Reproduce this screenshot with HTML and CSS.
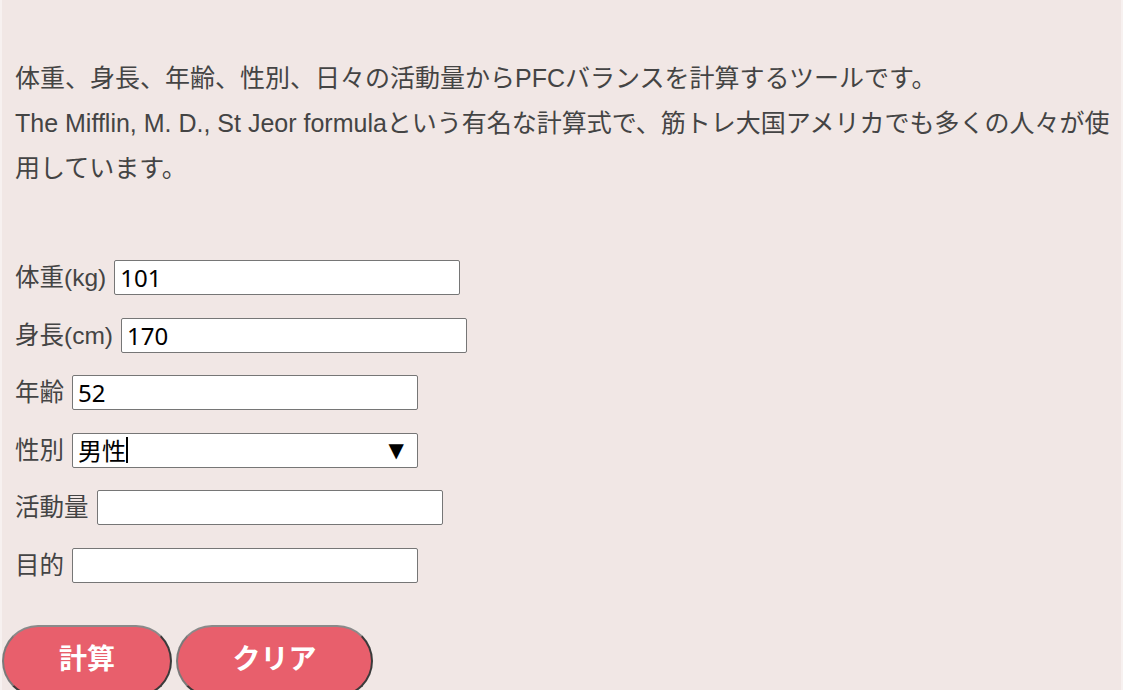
FILE: index.html
```html
<!DOCTYPE html>
<html lang="ja">
<head>
<meta charset="utf-8">
<title>PFCバランス計算</title>
<link rel="stylesheet" href="styles.css">
</head>
<body>
<div class="page">
  <div class="intro">
    <p>体重、身長、年齢、性別、日々の活動量からPFCバランスを計算するツールです。<br>The Mifflin, M. D., St Jeor formulaという有名な計算式で、筋トレ大国アメリカでも多くの人々が使用しています。</p>
  </div>
  <form class="form">
    <div class="row"><label>体重(kg)</label><input class="field" type="text" value="101"></div>
    <div class="row"><label>身長(cm)</label><input class="field" type="text" value="170"></div>
    <div class="row"><label>年齢</label><input class="field" type="text" value="52"></div>
    <div class="row"><label>性別</label><div class="field select"><span class="val">男性</span><span class="caret"></span><span class="arrow">▼</span></div></div>
    <div class="row"><label>活動量</label><input class="field" type="text" value=""></div>
    <div class="row"><label>目的</label><input class="field" type="text" value=""></div>
  </form>
  <div class="buttons">
    <button class="btn btn-calc" type="button">計算</button>
    <button class="btn btn-clear" type="button">クリア</button>
  </div>
</div>
</body>
</html>
```
FILE: styles.css
```css
html, body {
  margin: 0;
  padding: 0;
  background: #f7f1f0;
  height: 100%;
  overflow: hidden;
}
.page {
  margin-left: 2px;
  margin-right: 2px;
  background: #f1e7e5;
  min-height: 100%;
  font-family: "Liberation Sans", "Noto Sans CJK JP", sans-serif;
  color: #444;
  font-size: 24.5px;
}
.intro {
  padding: 56px 4px 0 13px;
  font-size: 25px;
}
.intro p {
  margin: 0;
  line-height: 45px;
}
.form {
  padding: 69px 0 0 13px;
  display: flex;
  flex-direction: column;
  gap: 22.5px;
}
.row {
  display: flex;
  align-items: center;
  gap: 8px;
  height: 35px;
}
.row label {
  line-height: 35px;
}
.field {
  box-sizing: border-box;
  width: 346px;
  height: 35px;
  border: 1px solid #767676;
  border-radius: 2px;
  background: #fff;
  font-family: "Noto Sans", "Noto Sans CJK JP", sans-serif;
  font-size: 24px;
  color: #000;
  padding: 0 5px;
  margin: 0;
  outline: none;
}
.select {
  display: flex;
  align-items: center;
  font-family: "Noto Sans CJK JP", sans-serif;
}
.select .val {
  line-height: 1;
}
.select .caret {
  width: 2px;
  height: 26px;
  background: #000;
}
.select .arrow {
  margin-left: auto;
  margin-right: 8px;
  font-family: "DejaVu Sans", sans-serif;
  font-size: 20px;
}
.buttons {
  display: flex;
  gap: 4px;
  padding-top: 42px;
}
.btn {
  height: 72px;
  border: 2px solid #3a3a3a;
  border-top-color: #8a8a8a;
  border-left-color: #7a7a7a;
  border-radius: 36px;
  background: #e85f6c;
  color: #fff;
  font-family: "Noto Sans CJK JP", sans-serif;
  font-weight: bold;
  font-size: 28px;
  padding: 0 0 8px;
  margin: 0;
}
.btn-calc { width: 170px; }
.btn-clear { width: 197px; }
```
